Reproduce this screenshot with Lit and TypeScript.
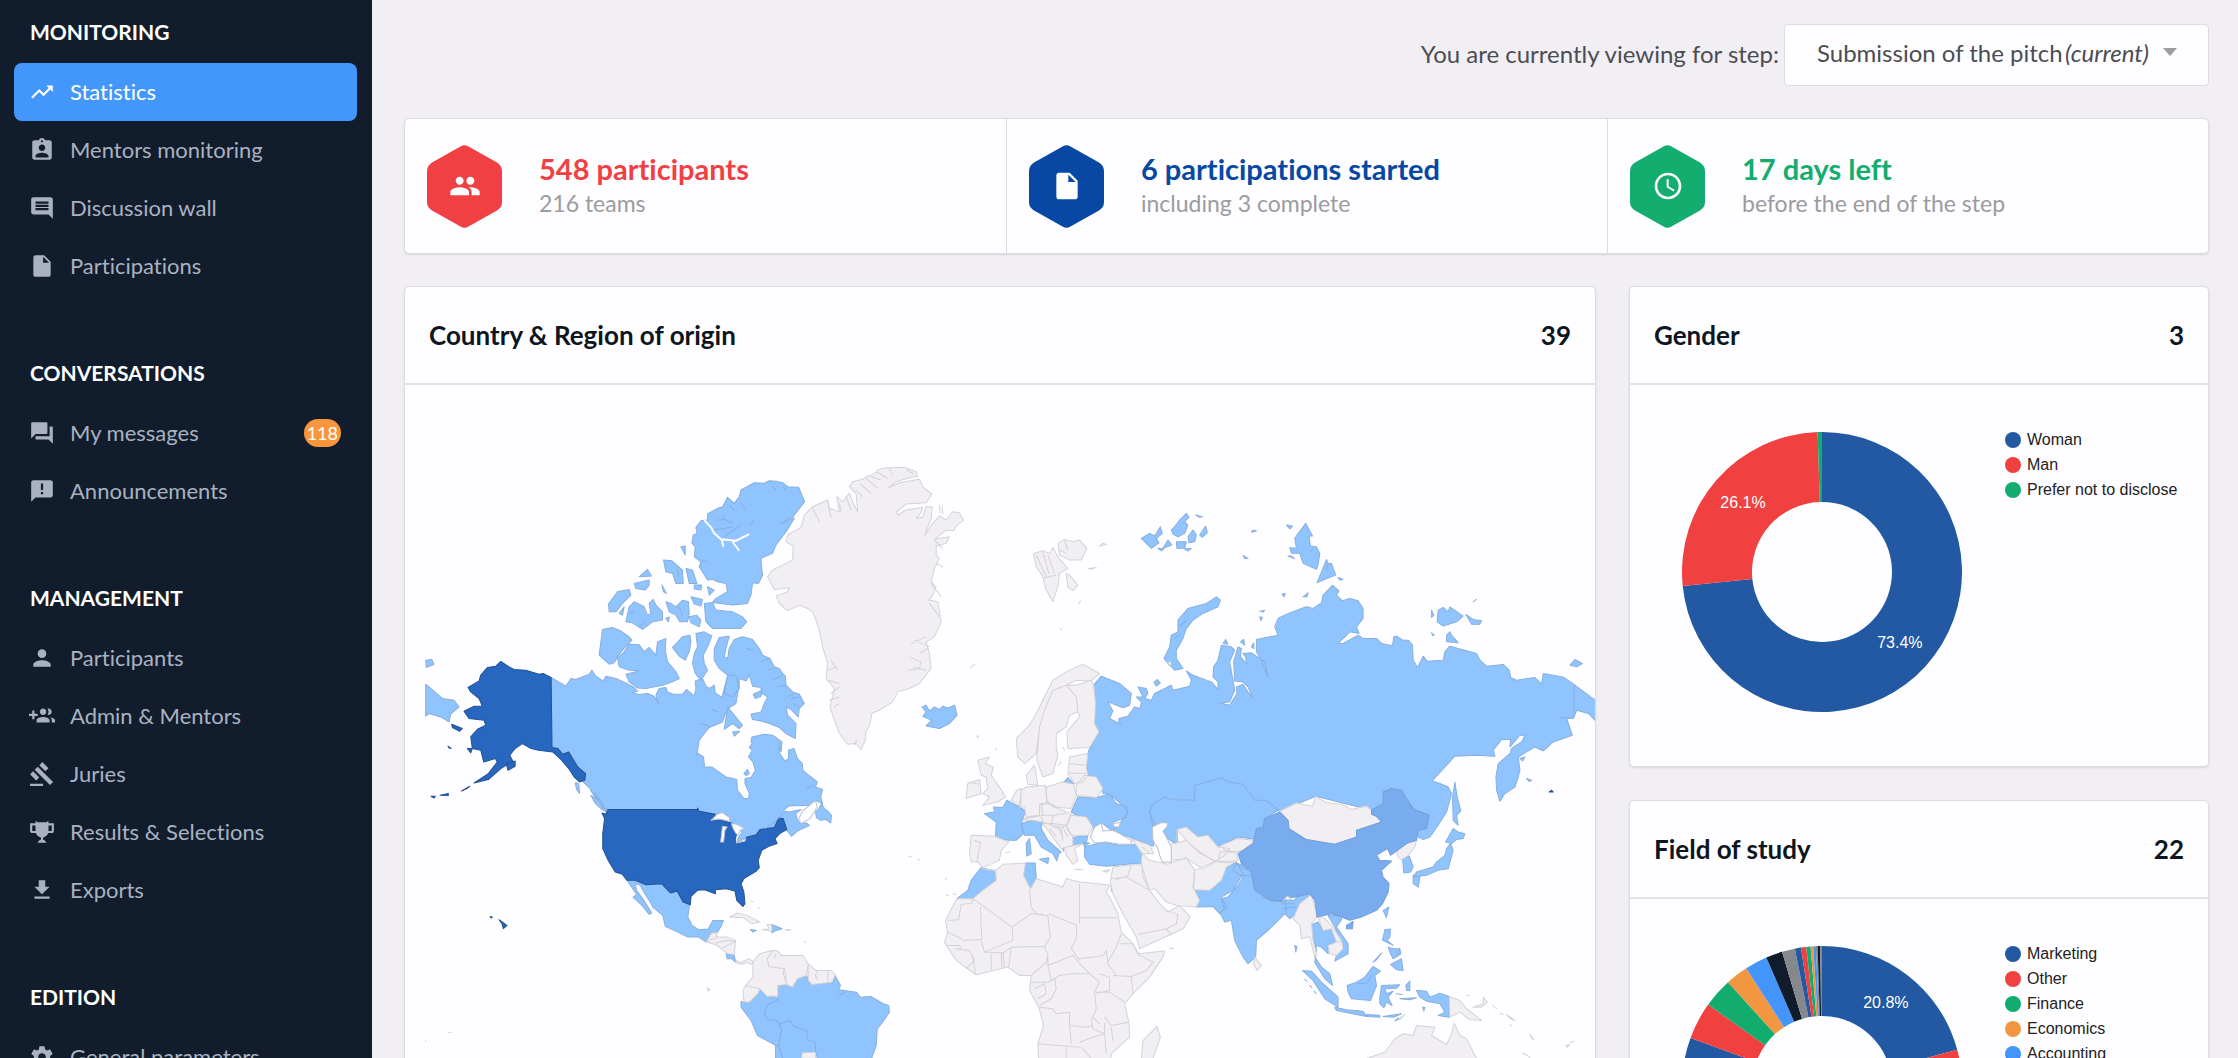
import { LitElement, html, svg, css } from "lit";
import { customElement, property } from "lit/decorators.js";
import { classMap } from "lit/directives/class-map.js";

const ICONS: Record<string, string> = {
  trend: "M16 6l2.29 2.29-4.88 4.88-4-4L2 16.59 3.41 18l6-6 4 4 6.3-6.29L22 12V6z",
  badge:
    "M19 3h-4.18C14.4 1.84 13.3 1 12 1c-1.3 0-2.4.84-2.82 2H5c-1.1 0-2 .9-2 2v14c0 1.1.9 2 2 2h14c1.1 0 2-.9 2-2V5c0-1.1-.9-2-2-2zm-7 0c.55 0 1 .45 1 1s-.45 1-1 1-1-.45-1-1 .45-1 1-1zm0 4c1.66 0 3 1.34 3 3s-1.34 3-3 3-3-1.34-3-3 1.34-3 3-3zm6 12H6v-1.4c0-2 4-3.1 6-3.1s6 1.1 6 3.1V19z",
  comment:
    "M21.99 4c0-1.1-.89-2-1.99-2H4c-1.1 0-2 .9-2 2v12c0 1.1.9 2 2 2h14l4 4-.01-18zM18 14H6v-2h12v2zm0-3H6V9h12v2zm0-3H6V6h12v2z",
  file: "M6 2c-1.1 0-1.99.9-1.99 2L4 20c0 1.1.89 2 1.99 2H18c1.1 0 2-.9 2-2V8l-6-6H6zm7 7V3.5L18.5 9H13z",
  messages:
    "M21 6h-2v9H6v2c0 .55.45 1 1 1h11l4 4V7c0-.55-.45-1-1-1zm-4 6V3c0-.55-.45-1-1-1H3c-.55 0-1 .45-1 1v14l4-4h10c.55 0 1-.45 1-1z",
  announce:
    "M20 2H4c-1.1 0-1.99.9-1.99 2L2 22l4-4h14c1.1 0 2-.9 2-2V4c0-1.1-.9-2-2-2zm-7 9h-2V5h2v6zm0 4h-2v-2h2v2z",
  person:
    "M12 12c2.21 0 4-1.79 4-4s-1.79-4-4-4-4 1.79-4 4 1.79 4 4 4zm0 2c-2.67 0-8 1.34-8 4v2h16v-2c0-2.66-5.33-4-8-4z",
  groupAdd:
    "M8 10H5V7H3v3H0v2h3v3h2v-3h3v-2zm10 1c1.66 0 2.99-1.34 2.99-3S19.66 5 18 5c-.32 0-.63.05-.91.14.57.81.9 1.79.9 2.86s-.34 2.04-.9 2.86c.28.09.59.14.91.14zm-5 0c1.66 0 2.99-1.34 2.99-3S14.66 5 13 5c-1.66 0-3 1.34-3 3s1.34 3 3 3zm6.62 2.16c.83.73 1.38 1.66 1.38 2.84v2h3v-2c0-1.54-2.37-2.49-4.38-2.84zM13 13c-2 0-6 1-6 3v2h12v-2c0-2-4-3-6-3z",
  gavel:
    "M1 21h12v2H1zM5.24 8.07l2.83-2.83 14.14 14.14-2.83 2.83zM12.32 1l5.66 5.66-2.83 2.83-5.66-5.66zM3.83 9.48l5.66 5.66-2.83 2.83L1 12.31z",
  trophy:
    "M18 2c-.9 0-1.500.4-1.800 1H7.800C7.500 2.400 6.900 2 6 2v2H1v7c0 1.100.9 2 2 2h3.300c.6 2 2.200 3.600 4.700 4v2.100C8.500 19.500 8 22 8 22h8s-.5-2.500-3-2.900V17c2.500-.4 4.100-2 4.700-4H21c1.100 0 2-.9 2-2V4h-5V2zM6 11H3V6h3v5zm15 0h-3V6h3v5z",
  download: "M19 9h-4V3H9v6H5l7 7 7-7zM5 18v2h14v-2H5z",
  settings:
    "M19.43 12.98c.04-.32.07-.64.07-.98s-.03-.66-.07-.98l2.11-1.65c.19-.15.24-.42.12-.64l-2-3.46c-.12-.22-.39-.3-.61-.22l-2.49 1c-.52-.4-1.08-.73-1.69-.98l-.38-2.65C14.46 2.18 14.25 2 14 2h-4c-.25 0-.46.18-.49.42l-.38 2.65c-.61.25-1.17.59-1.69.98l-2.49-1c-.23-.09-.49 0-.61.22l-2 3.46c-.13.22-.07.49.12.64l2.11 1.65c-.04.32-.07.65-.07.98s.03.66.07.98l-2.11 1.65c-.19.15-.24.42-.12.64l2 3.46c.12.22.39.3.61.22l2.49-1c.52.4 1.08.73 1.69.98l.38 2.65c.03.24.24.42.49.42h4c.25 0 .46-.18.49-.42l.38-2.65c.61-.25 1.17-.59 1.69-.98l2.49 1c.23.09.49 0 .61-.22l2-3.46c.12-.22.07-.49-.12-.64l-2.11-1.65zM12 15.5c-1.93 0-3.500-1.570-3.500-3.500s1.570-3.500 3.500-3.500 3.500 1.570 3.500 3.500-1.570 3.500-3.500 3.500z",
  people:
    "M16 11c1.66 0 2.99-1.34 2.99-3S17.66 5 16 5c-1.66 0-3 1.34-3 3s1.34 3 3 3zm-8 0c1.66 0 2.99-1.34 2.99-3S9.66 5 8 5C6.34 5 5 6.34 5 8s1.34 3 3 3zm0 2c-2.33 0-7 1.17-7 3.5V19h14v-2.5c0-2.33-4.67-3.5-7-3.5zm8 0c-.29 0-.62.02-.97.05 1.16.84 1.97 1.97 1.97 3.45V19h6v-2.5c0-2.33-4.67-3.5-7-3.5z",
  clock:
    "M11.99 2C6.47 2 2 6.48 2 12s4.47 10 9.99 10C17.52 22 22 17.52 22 12S17.52 2 11.99 2zM12 20c-4.42 0-8-3.58-8-8s3.58-8 8-8 8 3.58 8 8-3.58 8-8 8zm.5-13H11v6l5.25 3.15.75-1.23-4.5-2.67z",
};

const icon = (name: string, size: number) => html`
  <svg class="icon" width=${size} height=${size} viewBox="0 0 24 24" aria-hidden="true">
    <path d=${ICONS[name]} />
  </svg>
`;

interface NavItem {
  icon: string;
  label: string;
  active?: boolean;
  count?: number;
}

const NAV: { title: string; items: NavItem[] }[] = [
  {
    title: "MONITORING",
    items: [
      { icon: "trend", label: "Statistics", active: true },
      { icon: "badge", label: "Mentors monitoring" },
      { icon: "comment", label: "Discussion wall" },
      { icon: "file", label: "Participations" },
    ],
  },
  {
    title: "CONVERSATIONS",
    items: [
      { icon: "messages", label: "My messages", count: 118 },
      { icon: "announce", label: "Announcements" },
    ],
  },
  {
    title: "MANAGEMENT",
    items: [
      { icon: "person", label: "Participants" },
      { icon: "groupAdd", label: "Admin & Mentors" },
      { icon: "gavel", label: "Juries" },
      { icon: "trophy", label: "Results & Selections" },
      { icon: "download", label: "Exports" },
    ],
  },
  { title: "EDITION", items: [{ icon: "settings", label: "General parameters" }] },
];

@customElement("side-nav")
export class SideNav extends LitElement {
  static styles = css`
    :host {
      display: block;
      box-sizing: border-box;
      background: #111d2c;
      color: #a9b2c1;
      padding: 20px 15px 0 14px;
      overflow: hidden;
      font-size: 22px;
    }
    .group {
      margin-bottom: 66px;
    }
    .title {
      margin: 0;
      padding: 0 16px 19px;
      font-size: 21px;
      line-height: 24px;
      font-weight: 700;
      color: #fff;
    }
    .list {
      list-style: none;
      margin: 0;
      padding: 0;
    }
    .item {
      display: flex;
      align-items: center;
      gap: 15px;
      height: 58px;
      padding: 0 16px 0 15px;
      box-sizing: border-box;
      border-radius: 8px;
      color: inherit;
      text-decoration: none;
    }
    .item.active {
      background: #4497fa;
      color: #fff;
    }
    .icon {
      flex: none;
      fill: currentColor;
    }
    .label {
      flex: 1;
      white-space: nowrap;
      padding-bottom: 2px;
    }
    .count {
      background: #f7963c;
      color: #fff;
      font-size: 18px;
      line-height: 28px;
      padding: 0 3px;
      border-radius: 14px;
    }
  `;

  render() {
    return html`
      <nav>
        ${NAV.map(
          (group) => html`
            <section class="group">
              <h2 class="title">${group.title}</h2>
              <ul class="list">
                ${group.items.map(
                  (item) => html`
                    <li>
                      <a href="#" class=${classMap({ item: true, active: !!item.active })}>
                        ${icon(item.icon, 26)}
                        <span class="label">${item.label}</span>
                        ${item.count ? html`<span class="count">${item.count}</span>` : ""}
                      </a>
                    </li>
                  `
                )}
              </ul>
            </section>
          `
        )}
      </nav>
    `;
  }
}

interface Slice {
  label: string;
  color: string;
  value: number;
}

@customElement("donut-chart")
export class DonutChart extends LitElement {
  @property({ attribute: false }) slices: Slice[] = [];

  static styles = css`
    :host {
      display: flex;
      align-items: flex-start;
      gap: 43px;
      padding: 47px 24px 54px 52px;
      font-family: "Liberation Sans", Arial, sans-serif;
      font-size: 16px;
      color: #222;
    }
    .chart {
      flex: none;
    }
    .value {
      fill: #fff;
      font-size: 16px;
      text-anchor: middle;
      dominant-baseline: central;
    }
    .legend {
      list-style: none;
      margin: 0;
      padding: 0;
      display: grid;
      gap: 9px;
    }
    .entry {
      display: flex;
      align-items: center;
      gap: 6px;
      line-height: 16px;
      white-space: nowrap;
    }
    .dot {
      width: 16px;
      height: 16px;
      border-radius: 50%;
    }
  `;

  private point(turn: number, r: number) {
    const a = turn * 2 * Math.PI;
    return `${(140 + r * Math.sin(a)).toFixed(2)} ${(140 - r * Math.cos(a)).toFixed(2)}`;
  }

  render() {
    const total = this.slices.reduce((sum, s) => sum + s.value, 0);
    let start = 0;
    const arcs = this.slices.map((s) => {
      const from = start;
      const to = (start += s.value / total);
      const large = to - from > 0.5 ? 1 : 0;
      const d = `M${this.point(from, 140)}A140 140 0 ${large} 1 ${this.point(to, 140)}L${this.point(to, 70)}A70 70 0 ${large} 0 ${this.point(from, 70)}Z`;
      const [x, y] = this.point((from + to) / 2, 105).split(" ");
      return svg`
        <path d=${d} fill=${s.color}></path>
        ${s.value >= 7 ? svg`<text class="value" x=${x} y=${y}>${s.value}%</text>` : ""}`;
    });
    return html`
      <svg class="chart" width="280" height="280" viewBox="0 0 280 280" role="img">${arcs}</svg>
      <ul class="legend">
        ${this.slices
          .filter((s) => s.label)
          .map(
            (s) => html`
              <li class="entry">
                <span class="dot" style="background:${s.color}"></span>${s.label}
              </li>
            `
          )}
      </ul>
    `;
  }
}

/* The outlines are kept in six tiles: x origin, y origin, x units and y units per map unit. */
const TILES: Record<string, number[]> = {
  nw: [400, 440, 3, 3],
  sw: [400, 740, 2.8, 3],
  n: [760, 440, 3, 3],
  ne: [1120, 480, 3, 3],
  eu: [920, 660, 3, 3],
  se: [1200, 740, 3, 3],
};

const outline = (spec: string) => {
  let tile = TILES.nw;
  const points: string[] = [];
  for (const token of spec.trim().split(/\s+/)) {
    if (TILES[token]) {
      tile = TILES[token];
      continue;
    }
    const [x, y] = token.split(",").map(Number);
    points.push(`${(tile[0] + x / tile[2]).toFixed(1)} ${(tile[1] + y / tile[3]).toFixed(1)}`);
  }
  return "M" + points.join("L");
};

const shapes = (tile: string, specs: string) =>
  specs
    .split(";")
    .map((s) => outline(`${tile} ${s}`) + "Z")
    .join("");

const lines = (tile: string, specs: string) =>
  specs
    .split(";")
    .map((s) => outline(`${tile} ${s}`))
    .join("");

const CANADA =
  outline(`nw 456,712 500,738 515,715 530,718 545,712 570,702 578,690 590,708 612,722 620,708 650,715 680,728 705,742 715,752 700,756 718,763 745,760 765,768 778,790 770,765 780,745 800,742 805,755 822,762 850,762 862,748 885,768 890,745 888,722 910,715 920,738 930,745 945,735 948,758 968,772 975,745 985,705 1010,705 1018,745 1010,790 985,805 978,820 970,845 930,862 915,880 900,900 893,945
  sw 838,40 852,50 855,80 875,80 915,110 945,118 947,150 965,175 978,175 980,160 968,130 968,115 985,112 997,90 990,65 978,50 988,30 980,22 988,10
  nw 1055,905 1058,890 1095,882 1120,885 1148,905 1145,935 sw 1062,10 1065,40 1080,62 1090,55 1090,30 1105,25 1115,55 1128,70 1130,90 1150,108 1170,125 1165,140 1185,148 1180,170 1185,190 1165,180 1150,195 1090,197 1075,212 1092,215 1125,208 1110,220 1115,240 1122,250 1140,248 1148,255 1115,272 1098,288 1085,270 1075,235 1050,262 1010,268 1000,283 975,290 945,310 948,295 960,275 942,255 925,245 925,230 905,217 885,222 840,213 585,208 572,205 565,190 545,165 535,145 515,125 522,100 500,80 475,35 458,42 445,25 428,22`) + "Z";

const ARCTIC = shapes(
  "nw",
  `945,625 960,592 990,588 980,625 975,650 985,655 990,625 1005,598 1030,590 1060,598 1080,625 1090,645 1112,655 1125,680 1140,685 1150,700 1158,708 1160,735 1180,755 1200,762 1215,790 1200,805 1197,830 1175,808 1160,800 1165,825 1190,850 1188,895 1160,880 1140,862 1110,850 1085,842 1060,838 1055,822 1085,815 1095,790 1105,770 1085,758 1085,742 1060,738 1050,705 1040,722 1020,715 1020,745 1000,770 975,760 985,705 960,685 945,660;
  690,612 720,614 735,635 750,622 770,645 775,605 800,595 798,630 805,665 830,695 840,715 820,725 790,735 740,745 715,743 690,725 680,702 720,692 690,690 660,680 655,655 675,635;
  610,568 640,562 665,572 690,590 698,600 670,630 655,650 645,668 630,672 600,645;
  820,622 850,590 872,585 875,605 870,635 858,660 840,648;
  890,580 915,575 938,587 925,620 912,645 915,670 925,690 905,720 888,700 880,670 885,640 895,620;
  925,222 955,205 970,200 985,172 1005,190 1020,170 1025,150 1065,128 1095,130 1110,122 1130,124 1150,128 1165,140 1198,142 1216,185 1185,225 1145,250 1185,235 1160,275 1130,315 1120,340 1085,355 1087,380 1090,405 1078,430 1060,428 1055,465 1045,490 1000,495 940,487 950,475 985,455 980,430 955,425 940,418 925,420 900,380 905,365 885,350 888,320 878,310 882,285 893,280 890,262 905,242 925,240;
  915,490 940,487 950,510 1000,515 1030,530 1042,545 1025,565 940,565 920,545;
  875,470 910,478 905,498 885,492;870,530 892,525 905,540 900,560 875,548;
  800,485 815,490 830,500 850,480 868,485 870,520 865,545 842,545 830,525 810,515;
  680,545 690,500 705,485 735,500 745,525 755,520 750,490 762,478 770,495 790,515 790,540 760,545 730,568 700,548;
  628,492 655,455 690,448 695,465 670,490 650,515 630,515;
  793,360 818,362 850,390 852,430 830,430 820,400 800,395;
  860,385 880,390 893,430 870,430;885,435 907,435 905,450 885,447;
  705,430 750,420 750,435 738,450 710,445;720,410 745,388 757,408;
  788,435 802,460 793,455;845,320 858,318 858,345;925,440 945,450 930,465;
  660,520 675,500 670,525;800,535 810,530 808,545;
  985,800 1030,855 1020,865 1000,850 975,867;1000,875 1022,873 1005,888;1062,762 1088,750 1085,768 1068,775`
);

const RUSSIA =
  outline(`eu 522,75 545,48 600,70 635,100 630,135 610,143 565,125 580,152 570,175 598,190 598,175
  ne 25,708 45,680 62,685 65,665 50,650 70,650 55,620 80,625 85,640 75,655 95,660 105,640 155,615 160,630 210,618 215,600 200,572 220,585 275,605 295,628 295,605 280,590 282,560 295,540 305,495 335,500 345,510 330,545 340,600 345,630 330,665 300,668 330,675 352,640 350,620 370,612 385,635 400,655 385,620 370,605 345,602 342,545 355,500 365,505 362,530 380,550 378,530 370,520 395,518 435,545 445,592 425,540 410,515 410,478 475,465 465,440 475,415 500,402 545,385 560,380 580,385 605,368 610,345 638,316 658,332 650,345 668,362 690,355 715,362 730,385 730,415 710,440 718,460 690,455 655,490 670,490 715,465 730,475 770,475 785,490 818,497 822,470 830,468 850,480 865,480 878,495 880,540 893,562 910,528 922,543 970,540 975,515 990,498 1070,520 1080,540 1100,558 1150,553 1168,570 1172,592 1190,600 1245,592 1265,612 1270,580 1330,590 1365,615 1412,650 1427,660 1427,722 1405,700 1370,690 1362,710 1340,715 1357,765 1300,785 1270,812 1245,800 1225,812 1195,830 1200,870
  se 955,110 945,140 915,160 900,183 890,150 888,110 895,70 930,40 935,25 965,5
  ne 1205,785 1215,765 1200,765 1170,800 1172,778 1145,778 1120,810 1125,828 1070,825 1005,828
  se 697,122 720,130 745,140 755,160 740,215 715,255 690,290 670,298 655,290 640,205 550,190 515,210 348,168 240,213 200,180 165,180 130,132 85,125 65,112
  eu 910,352 825,375 825,420 755,418 735,410 700,430 690,455 705,490 698,515 702,558 690,555 630,530 575,513 600,490 625,455 610,435 570,402 550,400 548,380 530,350 505,345 500,300 508,270 538,215 525,190 528,130 518,100`) + "Z";

const RUSSIAN_ISLANDS =
  shapes(
    "ne",
    `65,175 90,160 105,168 122,140 128,160 110,175 118,188 95,205;155,150 165,140 180,120 200,100 208,112 195,125 205,135 195,160 175,170 160,162;
    170,185 200,185 195,205 172,205;205,170 220,150 230,165 225,185 208,188;240,165 258,138 263,158 248,172;130,205 145,180 157,195;228,105 248,110 240,112;
    115,205 133,207 125,212;195,207 215,205 205,213;
    558,130 578,168 568,168 572,198 590,200 600,220 595,255 590,268 550,250 540,220 515,220 510,203 530,205 525,175;505,228 525,236 515,228;
    592,308 620,238 625,250 635,250 648,285 615,298;500,135 518,138 510,147;655,292 670,298 660,300;395,157 400,150 410,153;370,226 385,235 375,235;
    290,350 302,360 295,380 250,400 220,420 200,445 190,475 170,510 170,535 190,565 165,570 145,548 133,535 150,500 155,465 175,455 175,420 205,385 260,370;
    955,390 970,382 985,395 990,380 1030,408 1010,425 970,438 952,425;1038,403 1060,418 1085,422 1080,432 1055,432;980,465 990,455 995,465 1015,488 980,485;935,390 942,405 935,412;
    1350,555 1365,538 1387,550 1370,560;420,393 435,391 430,396;420,410 428,412 424,422;550,350 565,338 562,350;487,342 497,340 493,350;935,458 943,465 938,466;1060,365 1070,358;
    103,607 113,598 122,608 110,618;362,485 372,478 375,495;395,500 402,488 403,505;310,490 318,478 325,492`
  ) +
  shapes("se", "765,125 772,170 783,212 770,225 775,255 760,240 758,170;980,115 995,120 988,124;960,55 975,50 968,62") +
  shapes("nw", "80,732 130,775 165,780 180,800 155,822 150,845 125,830 90,820 80,828;80,660 98,658 105,672 82,682");

const LIGHT =
  CANADA +
  ARCTIC +
  RUSSIAN_ISLANDS +
  RUSSIA +
  shapes(
    "sw",
    `1165,215 1175,205 1182,190 1190,205 1200,213 1210,225 1208,248 1195,238 1180,240 1168,232;537,165 560,182 582,215 568,208 548,188;493,128 503,130 505,160 497,148;965,100 975,88 980,100 972,106;
    638,420 660,420 690,433 735,430 760,458 778,452 795,485 813,493 808,530 820,555 838,568 865,566 878,540 908,540 900,560 890,577 870,578 860,605 838,590 808,590 780,575 745,558 738,525 710,500 700,480 685,455 675,435 660,430 665,450 685,480 707,518 700,522 680,495 655,470 665,462;
    915,640 938,645 942,665 930,655 918,655;1043,552 1072,565 1055,570 1043,577;983,567 1000,570 990,575;
    980,785 1005,758 1010,745 1030,768 1055,770 1060,778 1030,795 1022,820 1035,840 1055,838 1070,865 1065,900 1060,918 1003,885 985,840 957,800 957,782 970,788;
    1060,778 1060,735 1085,732 1100,740 1115,715 1140,705 1150,730 1185,728 1215,725 1220,705 1235,735 1230,748 1280,755 1290,770 1320,768 1355,790 1370,795 1372,815 1350,850 1338,865 1335,915 1310,990 1250,1060 1200,1060 1165,935 1165,905 1145,900 1140,870 1105,858 1095,840 1065,850 1055,838 1035,840 1022,820 1030,795;
    1065,850 1095,840 1105,858 1140,870 1145,900 1165,905 1165,935 1128,937 1125,970 1078,970 1062,915 1070,865;1053,915 1062,918 1078,970 1078,1060 1055,1060`
  ) +
  shapes("n", "488,800 500,795 510,812 525,800 540,808 550,798 565,803 585,795 593,825 570,850 540,865 500,857 517,840 490,828 500,815") +
  outline(`se 65,112 85,125 130,132 165,180 200,180 235,210 195,235 190,262 170,265 165,297 115,290 60,317 40,318 20,285 -5,290
    eu 830,525 800,500 772,508 775,550 760,545 738,530 730,510 745,488 725,487 700,500 690,455 700,430 735,410 755,418 825,420 825,375 910,352`) +
  "Z" +
  shapes(
    "eu",
    `950,605 970,640 940,690 905,710 920,740 900,760 880,738 830,740 840,715 822,688 870,690 900,665 920,620;
    430,370 445,352 462,370;195,460 225,455 222,440 250,442 262,420 300,440 318,452 305,490 312,520 290,540 268,540 228,532 230,485;
    305,490 340,480 370,480 365,505 385,540 425,575 418,580 412,602 400,580 365,560 345,525 315,525;360,597 388,592 385,610;320,550 330,535 335,580 322,587;
    458,532 505,525 500,548 460,555;425,545 438,550 432,572;
    455,455 475,410 530,412 570,402 590,430 625,440 620,470 580,487 590,500 575,510 550,490 515,505 510,490 500,470 470,465;
    495,560 550,545 600,555 650,553 668,580 665,608 590,615 560,618 510,612 495,590;490,547 510,548 495,558;
    112,715 145,690 155,660 185,622 228,632 230,660 190,690 160,715;318,608 347,608 350,655 333,685 312,645;575,672 615,655 595,690 575,692`
  ) +
  shapes(
    "se",
    `110,368 155,385 165,410 165,450 210,480 245,487 255,478 285,480 290,470 320,458 330,465 300,490 290,520 270,535 255,520 245,530 205,570 170,600 168,650 145,670 130,650 105,600 95,540 75,545 60,515 75,510 65,475 85,470 115,435 130,410 100,390;
    608,355 628,347 640,380 632,395 612,398;737,305 760,265 775,275 795,280 790,295 770,298 755,310;740,325 752,310 760,330 745,385 715,390 680,405 640,410 650,395 700,380 710,365 735,345;640,405 660,410 655,440 640,430;550,510 567,500 560,532;
    330,555 355,545 370,570 395,565 412,600 385,615 385,640 365,620 350,615 345,650 365,680 390,700 398,735 375,715 345,665 350,630 340,590;
    385,525 425,525 425,538 410,560 445,610 445,640 405,662 410,645 430,625 405,560;308,690 335,692 370,730 415,770 415,800 375,775 340,720;
    405,800 440,808 490,812 500,828 410,810;500,822 540,824 540,830 502,828;550,828 605,820 580,830;595,832 585,842 597,834;
    442,735 470,725 495,710 520,678 542,692 525,705 530,735 512,780 455,775 445,755;540,770 545,735 600,733 590,743 555,745 560,760 580,752 565,770 577,795 560,785 552,802 540,790;
    555,568 572,566 570,590 562,600 580,615 560,605 548,600;565,620 580,625 600,625 603,640 580,655 572,640;572,672 605,655 610,690 590,688;520,665 545,638 530,658;
    650,750 680,752 690,770 720,758 748,768 748,830 715,825 735,815 720,790 680,782 660,770;618,735 630,722 630,750 620,750;600,775 650,772 630,778;588,760 608,762;668,800 672,812 675,800;285,615 292,618 288,635;315,717 322,722;330,735 336,742;343,752 350,760`
  );

const DARK =
  outline(`nw 456,712 432,700 420,702 380,690 345,688 330,680 305,664 290,678 265,682 245,705 240,722 207,742 215,755 240,775 250,798 225,798 195,813 210,835 255,840 260,855 235,867 215,890 220,925 245,930
    sw 237,65 270,55 275,65 250,100 210,128 250,118 285,85 318,62 310,45 325,25 345,10 370,25 390,30 430,35 455,60 475,85 490,110 505,125 520,120 522,100 500,80 475,35 458,42 445,25 428,22`) +
  "Z" +
  shapes(
    "sw",
    `300,70 325,62 325,78 305,90;175,152 198,138 190,145;115,165 138,160 138,166;90,168 102,168 98,173;280,538 302,555 292,565 288,550;255,528 261,530 258,533;
    568,218 578,222 585,208 835,208 835,203 840,213 885,222 880,238 905,240 935,250 945,280 940,300 945,310 975,290 1000,283 1010,268 1050,262 1062,233 1075,235 1085,268 1065,280 1052,295 1058,310 1035,318 1015,330 1005,360 1008,382 1000,392 965,415 957,430 965,455 968,490 962,498 945,480 940,452 915,445 885,448 885,460 855,448 835,450 817,468 815,493 795,485 778,452 760,458 735,430 690,433 660,420 638,420 625,402 605,395 585,360 570,325 570,280 575,235`
  ) +
  shapes("nw", "158,852 190,865 182,873 160,862;147,918 157,925 150,923;205,925 220,925 215,938") +
  shapes("se", "1048,155 1055,150 1060,155");

const MID = shapes(
  "se",
  `240,215 265,240 268,265 320,298 405,312 470,290 470,270 545,245 530,228 515,222 515,210 550,190 550,155 575,145 605,150 620,175 640,205 655,212 688,225 680,265 655,270 650,300 620,310 590,332 572,345 563,325 530,345 540,360 575,362 545,390 550,410 568,430 565,455 548,490 530,510 485,530 450,540 425,530 395,520 375,525 352,530 345,480 330,460 285,470 250,475 245,485 210,480 165,450 155,395 125,370 115,340 160,310 170,265 190,262 195,235;440,555 460,543 458,565 440,565`
);

const NEUTRAL =
  shapes(
    "n",
    `375,84 435,82 470,95 475,108 445,115 410,125 385,145 420,128 480,118 490,140 517,162 500,188 440,192 412,215 415,225 440,210 490,202 485,218 470,235 490,232 500,200 518,200 515,235 495,288 520,250 540,228 560,240 580,215 600,218 612,240 590,258 582,272 560,270 525,298 570,290 560,310 530,318 530,345 540,355 525,385 515,425 530,440 520,465 508,480 535,485 545,545 525,590 500,605 510,640 515,685 495,710 480,730 450,745 415,755 400,785 360,810 338,818 332,850 318,880 318,900 305,928 290,910 265,912 240,880 225,840 212,800 225,745 200,715 205,670 190,620 180,570 162,518 145,505 120,495 85,512 60,490 50,468 85,455 90,443 45,448 25,410 40,390 75,372 100,360 102,318 80,305 85,285 125,262 135,225 160,200 205,180 210,205 240,215 232,170 250,185 270,160 280,185 295,215 290,160 270,140 280,125 310,118 325,108 340,105 355,90;
    822,340 850,332 870,340 880,322 895,350 925,385 900,400 895,440 880,485 860,450 850,410 830,380;895,310 915,298 940,305 960,300 982,325 965,360 930,360 900,345;920,400 930,405 955,435 940,452 925,440;1020,318 1030,310 1042,313;985,385 1010,382 995,388;958,490 963,483;634,682 646,673;903,565 905,569;653,886 657,892`
  ) +
  shapes(
    "sw",
    `860,605 875,578 890,577 888,590 920,590 942,600 938,642 920,640 885,612;942,660 955,667 980,655 992,665 985,672 972,665 960,672 945,668;
    925,530 945,518 975,525 1010,545 985,550 965,532;1015,568 1035,565 1030,553 1043,552 1043,572;1080,567 1097,568 1085,571;
    990,665 1008,640 1045,630 1030,655 1035,678 1078,685 1075,700 1085,732 1060,735 1060,765 1030,768 1010,745 970,735 990,710;
    1045,630 1060,632 1070,645 1130,645 1145,670 1140,705 1115,715 1100,740 1085,732 1078,685 1035,678 1030,655;
    1145,670 1165,690 1210,690 1222,703 1210,725 1155,732 1145,720;970,735 1010,745 1005,758 980,785 965,782 962,750;1128,937 1165,935 1165,970 1125,970;
    863,742 870,748 865,752;63,903 75,900 70,907;138,875 145,876;1427,348 1433,350;1452,357 1457,359;1528,415 1532,417;1532,463 1537,465;985,482 990,484;1005,500 1008,505;1135,603 1138,606`
  ) +
  shapes(
    "eu",
    `290,235 330,195 350,160 385,90 400,60 440,35 490,12 540,40 515,62 470,60 440,75 400,90 375,150 360,200 350,280 315,310 295,290;
    400,90 440,75 470,110 475,155 450,165 440,200 410,220 410,260 415,285 400,340 370,350 352,300 360,200 375,150;
    440,75 470,75 515,60 522,75 528,130 525,190 538,215 510,262 445,265 442,215 480,170 475,155 470,110;
    450,290 505,280 500,320 505,345 490,365 465,370 445,340;470,375 495,345 530,350 550,385 530,412 470,405;320,345 345,315 350,345 355,375 325,372;
    380,380 430,365 462,372 470,405 455,445 400,440 382,420;305,390 320,380 378,375 382,430 365,435 370,465 320,475 315,440 300,440;275,420 290,392 305,385 303,440;
    310,480 320,470 360,465 360,432 385,428 415,445 455,460 440,495 425,500 400,495 370,485 340,480;370,490 400,490 440,495 460,530 460,555 425,565 400,530;440,500 455,465 500,470 520,500 505,525 455,525;435,562 490,550 465,565 475,600 460,612 440,585;
    175,300 210,290 198,310 222,322 215,345 240,380 258,410 235,425 190,435 210,410 190,400 205,385 200,350 185,345;145,370 180,358 185,400 140,415;155,525 225,528 268,545 245,570 240,600 190,622 175,605 155,605 150,575;
    635,535 690,555 702,580 668,580 650,555;772,508 772,548 745,552 755,600 800,595 850,625 890,603 840,578 800,540;772,508 800,500 835,530 865,525 895,560 930,565 915,585 885,603 840,575 800,540 772,548;
    905,555 955,535 1005,540 970,570 950,575 915,570;895,605 900,575 950,575 955,600 925,607;
    668,580 690,600 745,612 800,592 825,630 820,680 840,720 830,740 770,735 740,725 705,685 690,690 670,650 665,600;825,630 885,603 950,603 920,620 905,660 870,690 822,688;
    580,620 635,613 665,613 690,690 720,730 745,755 780,735 812,770 790,805 660,865 650,830 610,760 580,700 572,665;
    190,625 230,630 250,612 318,608 312,645 333,685 350,655 400,670 430,680 440,655 480,665 550,672 570,675 560,695 575,720 595,760 605,815 640,850 655,880 735,872 730,890 690,950 640,1000 615,1030 628,1085 630,1130 575,1180 570,1250 360,1250 355,1150 372,1095 358,1040 330,990 335,945 300,945 265,920 170,943 110,900 75,845 85,815 78,780 112,715 160,715 190,690 230,660 228,632;
    712,1098 722,1130 695,1210 665,1200 670,1140;465,627 490,628;550,632 572,628 560,636;750,863 762,865;228,265 231,268;172,228 176,232;78,655 82,657;80,703 88,705;100,700 110,702;260,577 272,575;415,315 425,305;430,262 435,270`
  ) +
  shapes(
    "se",
    `240,213 290,188 338,198 348,168 378,187 430,193 455,208 500,197 515,210 515,222 530,228 545,245 500,262 470,270 470,290 405,312 320,298 268,265 265,240;165,450 180,445 245,475 245,487 210,480;165,650 185,675 172,690 162,672;
    590,328 620,310 650,297 645,320 625,345 605,358 595,350;335,462 345,500 355,525 335,550 340,600 350,640 345,650 330,590 305,595 300,555 280,535 300,490;355,530 370,530 395,555 425,600 410,605 395,565 370,570;385,615 425,600 430,625 410,645 390,640;
    748,768 780,780 800,805 845,840 810,838 780,815 750,830;820,800 850,790 850,770 862,785 845,800;
    500,954 555,935 585,895 610,880 640,885 650,855 705,860 695,885 740,913 755,880 763,848 780,885 800,895 830,954 860,1010 480,1010;
    595,838 615,822 600,838;878,795 890,805;900,818 910,822;920,823 945,840 930,833;990,882 1002,898 995,893;1097,915 1110,912 1102,920;1110,905 1122,902;970,938 990,950;930,853 936,857;800,765 808,764`
  );

const NEUTRAL_BORDERS =
  lines(
    "eu",
    `85,780 118,778 125,732 160,728 160,715;160,715 278,800 280,840 245,855 195,875 185,840;183,740 187,837 132,840 120,832 85,815;278,800 335,760 385,765 392,830 375,860;330,690 335,740 350,760 370,762;
    480,670 480,790;480,772 592,772;388,760 472,795 470,835 455,865 480,900;275,860 375,858 385,885 380,905 335,945;275,860 268,920;250,875 255,920;245,880 248,925;215,880 215,930;160,890 168,940;105,865 150,870 165,900 140,925;80,855 120,855 125,865;195,875 250,878 275,860;
    385,915 460,885 480,910 510,940;385,885 385,915 395,960 420,945;480,895 520,890 550,885 560,870 565,910 590,945;605,820 590,860 565,905;600,850 640,850 660,885 700,905 680,930 635,948;580,945 635,948 640,1000;
    540,940 570,950 570,990 530,998;420,945 455,940 510,940 540,965 525,995 530,1045 520,1070 540,1090;335,965 385,965 405,955 410,985 395,1015 360,1035;345,985 375,970 380,1000 355,1015;360,1040 400,1045 410,1060 450,1055 450,1095 500,1100 520,1095;450,1095 455,1150;355,1150 480,1160;480,1145 520,1130 555,1120 555,1085;530,995 570,995 615,1025;555,1070 575,1095 628,1085;515,1070 520,1105 555,1120;575,1100 580,1140;440,1160 440,1240;485,1160 520,1200;555,1120 560,1180;
    165,540 183,548 172,605;450,310 500,315;448,338 500,340;360,432 385,428 412,440;370,465 400,465 440,460;365,470 370,485;400,465 395,495;400,500 425,505 430,540;415,500 430,530;430,500 445,530;390,505 410,530;145,365 180,372;
    655,822 740,805 770,790 775,762 740,750;740,805 755,825;575,655 620,650 690,690;635,613 625,645 585,660;668,560 690,578`
  ) +
  lines("sw", "865,600 890,592;885,608 915,600 942,602;905,622 925,612 942,602;1170,690 1165,705 1172,720;1200,690 1200,722;1055,640 1050,655") +
  lines(
    "n",
    `160,205 180,245;205,185 215,232;240,190 245,215;260,170 275,210;290,150 310,170;300,130 335,160;320,115 355,145;335,110 365,120;350,95 385,115;390,88 400,105;440,88 462,102;
    540,195 542,220;548,200 550,222;525,300 550,325;530,370 550,380;515,430 545,470;510,490 540,530;465,600 510,620;455,610 500,590;480,640 505,625;450,650 485,665 480,685 445,690;460,680 500,690;205,690 235,680;215,660 235,690;205,720 240,730;215,760 240,740;210,780 240,770;225,800 238,790;285,915 292,900;
    830,345 860,410;850,335 868,400;865,345 885,400;850,415 890,405;900,330 920,340;915,300 925,330`
  );

const LIGHT_BORDERS =
  lines(
    "nw",
    `950,240 970,240 975,225;990,195 1005,210;1025,190 1040,212;940,270 1000,262;975,290 1025,255;1050,255 1062,240;1130,150 1120,140;1160,150 1150,140;905,365 920,360;970,235 1000,250;1145,250 1185,230;
    1040,625 1060,630;1110,655 1085,665;1130,680 1105,690;1150,705 1120,720;1160,735 1135,740;1185,760 1160,770;1200,770 1175,775;1180,790 1200,800;935,808 958,815;905,850 930,858;720,560 735,545;840,500 850,530;690,520 705,515;835,380 838,410`
  ) +
  lines("ne", "1362,615 1362,712;1320,712 1362,715;620,270 625,250;570,215 580,205;180,440 200,420;165,475 185,460;0,722 5,732") +
  lines("se", "245,490 285,490;250,505 290,500;255,480 260,520;110,370 130,385 160,390;120,405 155,405;470,728 500,730 515,705;600,625 590,650") +
  lines("sw", "1140,145 1160,135;1230,765 1250,755;1025,265 1055,240 1075,220;535,150 560,180;548,155 575,200");

const WATER =
  shapes(
    "sw",
    "873,240 890,222 905,217 925,232 925,243 895,236;905,258 918,260 912,270 908,305 900,305;930,250 945,252 967,265 955,270 948,285 942,278 935,265;944,308 970,294 968,302;1130,212 1165,180 1170,200 1150,235 1125,250 1118,235"
  ) +
  shapes("eu", "512,530 525,500 545,488 550,512 580,510 600,520 635,540 635,552 600,552 560,545 525,548;698,500 725,487 745,488 742,500 730,512 745,540 755,560 755,605 728,605 720,585 715,565 700,540;580,490 602,487 598,500 585,500") +
  shapes("se", "253,476 262,468 275,473 265,479") +
  shapes("ne", "145,545 155,545 153,555 147,555");

const FJORDS = lines("nw", "915,240 935,262 945,280 965,298 1010,302 1050,282;968,300 972,320;1000,305 1020,332");

@customElement("world-map")
export class WorldMap extends LitElement {
  static styles = css`
    :host {
      display: block;
      padding: 82px 0 0 20px;
    }
    .map {
      display: block;
      width: 100%;
      overflow: hidden;
      stroke-linejoin: round;
    }
    .neutral {
      fill: #f1eff2;
      stroke: #d4d2d5;
    }
    .light {
      fill: #90c4ff;
      stroke: #87afdf;
    }
    .mid {
      fill: #79acee;
      stroke: #739fd8;
    }
    .dark {
      fill: #2767bf;
      stroke: #225396;
    }
    .lines {
      fill: none;
    }
    .water {
      fill: #fefdff;
      stroke: #b9c2cf;
    }
    .fjord {
      fill: none;
      stroke: #fefdff;
      stroke-width: 2;
    }
  `;

  render() {
    return html`
      <svg class="map" viewBox="426 467 1169 640" role="img" aria-label="Participants by country">
        <path class="light" d=${LIGHT}></path>
        <path class="neutral" d=${NEUTRAL}></path>
        <path class="neutral lines" d=${NEUTRAL_BORDERS}></path>
        <path class="mid" d=${MID}></path>
        <path class="dark" d=${DARK}></path>
        <path class="light lines" d=${LIGHT_BORDERS}></path>
        <path class="water" d=${WATER}></path>
        <path class="fjord" d=${FJORDS}></path>
      </svg>
    `;
  }
}

@customElement("stat-card")
export class StatCard extends LitElement {
  @property() heading = "";
  @property() count = "";

  static styles = css`
    :host {
      display: block;
      background: #fefdff;
      border: 1px solid #dedce0;
      border-radius: 5px;
      box-shadow: 0 1px 2px #d8d6da;
      overflow: hidden;
    }
    .head {
      display: flex;
      align-items: center;
      justify-content: space-between;
      height: 98px;
      padding: 0 24px;
      border-bottom: 2px solid #e3e1e5;
      box-sizing: border-box;
    }
    .title,
    .count {
      margin: 0;
      font-size: 26px;
      line-height: 32px;
      font-weight: 700;
      color: #0d1620;
    }
  `;

  render() {
    return html`
      <header class="head">
        <h3 class="title">${this.heading}</h3>
        <span class="count">${this.count}</span>
      </header>
      <slot></slot>
    `;
  }
}

const BLUE = "#2259a2";
const RED = "#f04040";
const GREEN = "#12ad6e";
const ORANGE = "#f39642";
const SKY = "#4495fb";
const INK = "#101c2b";
const GREY = "#85888d";

const GENDER: Slice[] = [
  { label: "Woman", color: BLUE, value: 73.4 },
  { label: "Man", color: RED, value: 26.1 },
  { label: "Prefer not to disclose", color: GREEN, value: 0.5 },
];

const STUDY: Slice[] = [
  { label: "Marketing", color: BLUE, value: 20.8 },
  { label: "Other", color: RED, value: 13.2 },
  { label: "Finance", color: GREEN, value: 11.4 },
  { label: "Economics", color: ORANGE, value: 9.9 },
  { label: "Accounting", color: SKY, value: 9.1 },
  { label: "", color: INK, value: 5.6 },
  { label: "", color: GREY, value: 5 },
  { label: "", color: BLUE, value: 5.5 },
  { label: "", color: RED, value: 4.3 },
  { label: "", color: GREEN, value: 3.4 },
  { label: "", color: ORANGE, value: 2.6 },
  { label: "", color: SKY, value: 2.6 },
  { label: "", color: INK, value: 1.9 },
  { label: "", color: GREY, value: 1.5 },
  { label: "", color: BLUE, value: 0.7 },
  { label: "", color: RED, value: 0.6 },
  { label: "", color: GREEN, value: 0.5 },
  { label: "", color: ORANGE, value: 0.3 },
  { label: "", color: SKY, value: 0.3 },
  { label: "", color: GREY, value: 0.2 },
  { label: "", color: INK, value: 0.3 },
  { label: "", color: GREY, value: 0.2 },
];

const SUMMARY = [
  { icon: "people", tone: "red", title: "548 participants", note: "216 teams" },
  { icon: "file", tone: "blue", title: "6 participations started", note: "including 3 complete" },
  { icon: "clock", tone: "green", title: "17 days left", note: "before the end of the step" },
];

@customElement("app-root")
export class AppRoot extends LitElement {
  static styles = css`
    :host {
      display: grid;
      grid-template-columns: 372px minmax(0, 1fr);
      height: 100vh;
      overflow: hidden;
      background: #f1eff3;
      font-family: Lato, "Open Sans", sans-serif;
      font-variant-ligatures: none;
      color: #4b4d53;
    }
    .main {
      padding: 24px 29px 0 32px;
      overflow: hidden;
    }
    .bar {
      display: flex;
      justify-content: flex-end;
      align-items: center;
      gap: 5px;
      margin-bottom: 32px;
      font-size: 24px;
    }
    .caption {
      padding-bottom: 4px;
    }
    .picker {
      display: grid;
      align-items: center;
    }
    .select,
    .hint {
      grid-area: 1 / 1;
    }
    .select {
      appearance: none;
      height: 62px;
      padding: 0 144px 6px 32px;
      border: 1px solid #dedce0;
      border-radius: 4px;
      background: #fefdff;
      color: inherit;
      font: inherit;
    }
    .hint {
      display: flex;
      align-items: center;
      gap: 14px;
      justify-self: end;
      padding: 0 32px 6px 0;
      font-style: italic;
      pointer-events: none;
    }
    .caret {
      border: 7px solid transparent;
      border-top: 8px solid #9c9ca1;
      border-bottom: 0;
    }
    .summary {
      display: grid;
      grid-template-columns: repeat(3, 1fr);
      margin-bottom: 32px;
      background: #fefdff;
      border: 1px solid #dedce0;
      border-radius: 5px;
      box-shadow: 0 1px 2px #d8d6da;
    }
    .tile {
      display: flex;
      align-items: center;
      gap: 37px;
      height: 134px;
      padding: 0 22px;
      border-left: 1px solid #dedce0;
    }
    .tile:first-child {
      border-left: 0;
    }
    .hex {
      display: grid;
      place-items: center;
      flex: none;
    }
    .shape,
    .hex .icon {
      grid-area: 1 / 1;
    }
    .hex .icon {
      fill: #fff;
    }
    .shape {
      fill: currentColor;
    }
    .red {
      color: #f04043;
    }
    .blue {
      color: #0748a4;
    }
    .green {
      color: #14ad70;
    }
    .words {
      padding-bottom: 3px;
    }
    .name {
      margin: 0;
      font-size: 29px;
      line-height: 36px;
      font-weight: 700;
    }
    .note {
      margin: 0;
      font-size: 23px;
      line-height: 32px;
      color: #9b9ba0;
    }
    .cards {
      display: grid;
      grid-template-columns: minmax(0, 1fr) 580px;
      align-items: start;
      gap: 33px;
    }
    .stack {
      display: grid;
      gap: 33px;
    }
  `;

  render() {
    return html`
      <side-nav></side-nav>
      <main class="main">
        <div class="bar">
          <label class="caption" for="step">You are currently viewing for step:</label>
          <div class="picker">
            <select id="step" class="select">
              <option>Submission of the pitch</option>
            </select>
            <span class="hint">(current)<span class="caret"></span></span>
          </div>
        </div>
        <section class="summary">
          ${SUMMARY.map(
            (s) => html`
              <div class="tile ${s.tone}">
                <div class="hex">
                  <svg class="shape" width="75" height="83" viewBox="0 0 75 83" aria-hidden="true">
                    <path
                      d="M33.500 1.500Q37.500 -1 41.500 1.500L70 17.500Q75 20.500 75 26V57Q75 62.500 70 65.500L41.500 81.500Q37.500 84 33.500 81.500L5 65.500Q0 62.500 0 57V26Q0 20.500 5 17.500Z"
                    />
                  </svg>
                  ${icon(s.icon, 32)}
                </div>
                <div class="words">
                  <p class="name">${s.title}</p>
                  <p class="note">${s.note}</p>
                </div>
              </div>
            `
          )}
        </section>
        <div class="cards">
          <stat-card heading="Country &amp; Region of origin" count="39">
            <world-map></world-map>
          </stat-card>
          <div class="stack">
            <stat-card heading="Gender" count="3">
              <donut-chart .slices=${GENDER}></donut-chart>
            </stat-card>
            <stat-card heading="Field of study" count="22">
              <donut-chart .slices=${STUDY}></donut-chart>
            </stat-card>
          </div>
        </div>
      </main>
    `;
  }
}
